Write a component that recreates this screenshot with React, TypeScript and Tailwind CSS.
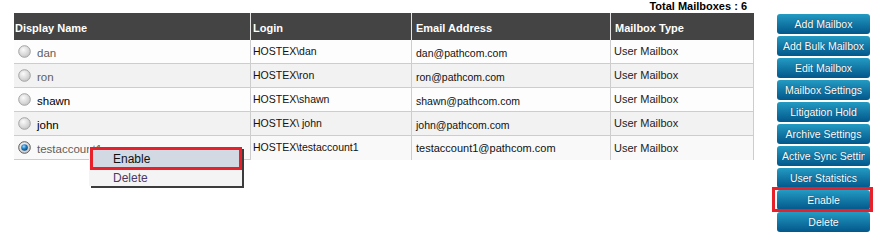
import React from 'react';

type Row = {
  name: string;
  login: string;
  email: string;
  type: string;
  muted: boolean;
  checked?: boolean;
  emailLow: boolean;
};

const rows: Row[] = [
  { name: 'dan', login: 'HOSTEX\\dan', email: 'dan@pathcom.com', type: 'User Mailbox', muted: true, emailLow: true },
  { name: 'ron', login: 'HOSTEX\\ron', email: 'ron@pathcom.com', type: 'User Mailbox', muted: true, emailLow: true },
  { name: 'shawn', login: 'HOSTEX\\shawn', email: 'shawn@pathcom.com', type: 'User Mailbox', muted: false, emailLow: true },
  { name: 'john', login: 'HOSTEX\\ john', email: 'john@pathcom.com', type: 'User Mailbox', muted: false, emailLow: true },
  {
    name: 'testaccount1',
    login: 'HOSTEX\\testaccount1',
    email: 'testaccount1@pathcom.com',
    type: 'User Mailbox',
    muted: true,
    checked: true,
    emailLow: false,
  },
];

const actions = [
  'Add Mailbox',
  'Add Bulk Mailbox',
  'Edit Mailbox',
  'Mailbox Settings',
  'Litigation Hold',
  'Archive Settings',
  'Active Sync Settings',
  'User Statistics',
  'Enable',
  'Delete',
];

function Radio({ checked }: { checked?: boolean }) {
  return (
    <svg width="13" height="13" viewBox="0 0 13 13" className="shrink-0" aria-hidden="true">
      <defs>
        <radialGradient id="rOff" cx="0.4" cy="0.35" r="0.7">
          <stop offset="0" stopColor="#fbfbfb" />
          <stop offset="1" stopColor="#c4c4c4" />
        </radialGradient>
        <radialGradient id="rOn" cx="0.4" cy="0.35" r="0.7">
          <stop offset="0" stopColor="#9fd8ff" />
          <stop offset="0.5" stopColor="#1f7fc4" />
          <stop offset="1" stopColor="#0b3d6b" />
        </radialGradient>
      </defs>
      <circle cx="6.5" cy="6.5" r="5.8" fill="url(#rOff)" stroke={checked ? '#5a5a5a' : '#a3a3a3'} strokeWidth="1" />
      {checked && <circle cx="6.5" cy="6.5" r="3.3" fill="url(#rOn)" />}
    </svg>
  );
}

export default function App() {
  return (
    <div
      className="relative h-[233px] w-[876px] overflow-hidden bg-white text-black"
      style={{ fontFamily: '"Liberation Sans", Arial, sans-serif' }}
    >
      <div className="flex">
        <div className="ml-[14px] w-[740px]">
          <div className="h-[13px] pr-[7px] text-right text-[11px] font-bold leading-[13px]">
            Total Mailboxes : 6
          </div>

          <div className="flex h-[27px] bg-[#444444] text-[11px] font-bold text-white">
            <div className="flex w-[236px] items-center pl-[1px] pt-[3px]">Display Name</div>
            <div className="flex w-[161px] items-center border-l border-[#e4e4e4] pl-[2px] pt-[3px]">Login</div>
            <div className="flex w-[199px] items-center border-l border-[#e4e4e4] pl-[4px] pt-[3px]">Email Address</div>
            <div className="flex flex-1 items-center border-l border-[#e4e4e4] pl-[4px] pt-[3px]">Mailbox Type</div>
          </div>

          {rows.map((r, i) => {
            const last = i === rows.length - 1;
            return (
              <div
                key={r.name}
                className={`flex h-[24px] border-r border-[#cdcdcd] text-[11px] ${
                  last ? 'bg-[#f9f9f9]' : 'border-b ' + (i % 2 === 0 ? 'bg-[#fdfdfd]' : 'bg-[#f2f2f2]')
                }`}
              >
                <div
                  className={`flex w-[236px] items-center gap-[6px] pl-[4px] ${
                    last ? 'border-b border-[#cdcdcd]' : ''
                  }`}
                >
                  <Radio checked={r.checked} />
                  <span className={`pt-[5px] text-[11.5px] ${r.muted ? 'text-[#5e5e5e]' : 'text-black'}`}>
                    {r.name}
                  </span>
                </div>
                <div className="flex w-[161px] items-center border-l border-[#cdcdcd] pl-[2px] text-[10.5px] text-[#111]">
                  {r.login}
                </div>
                <div
                  className={`flex w-[199px] items-center border-l border-[#cdcdcd] pl-[4px] text-[#111] ${
                    r.emailLow ? 'pt-[5px] text-[10.5px]' : 'text-[11px]'
                  }`}
                >
                  {r.email}
                </div>
                <div className="flex flex-1 items-center border-l border-[#cdcdcd] pl-[3px] text-[#222]">
                  {r.type}
                </div>
              </div>
            );
          })}
        </div>

        <div className="ml-[23px] mt-[14px] flex w-[93px] flex-col gap-[2px]">
          {actions.map((a) => (
            <div key={a} className="relative">
              <button className="block h-[20px] w-[93px] rounded-[3px] bg-gradient-to-b from-[#239bc2] to-[#04578a] px-[5px] text-[10.5px] leading-[20px] text-white [text-shadow:0_0_1px_#03385c]">
                <span className="block overflow-hidden whitespace-nowrap text-center">{a}</span>
              </button>
              {a === 'Enable' && (
                <div className="pointer-events-none absolute -left-[5px] -top-[3px] h-[25px] w-[101px] border-[3px] border-[#e8202a]" />
              )}
            </div>
          ))}
        </div>
      </div>

      <div className="absolute left-[89px] top-[147px] w-[153px] bg-[#f4f4f4] text-[12px] shadow-[2px_2px_0_#3c3c3c]">
        <div className="ml-[1px] flex h-[23px] items-center border-[3px] border-[#e8202a] bg-[#d2d9e2] pl-[20px] text-[#111]">
          Enable
        </div>
        <div className="flex h-[16px] items-center pl-[24px] text-[#4a3a6a]">Delete</div>
      </div>
    </div>
  );
}
